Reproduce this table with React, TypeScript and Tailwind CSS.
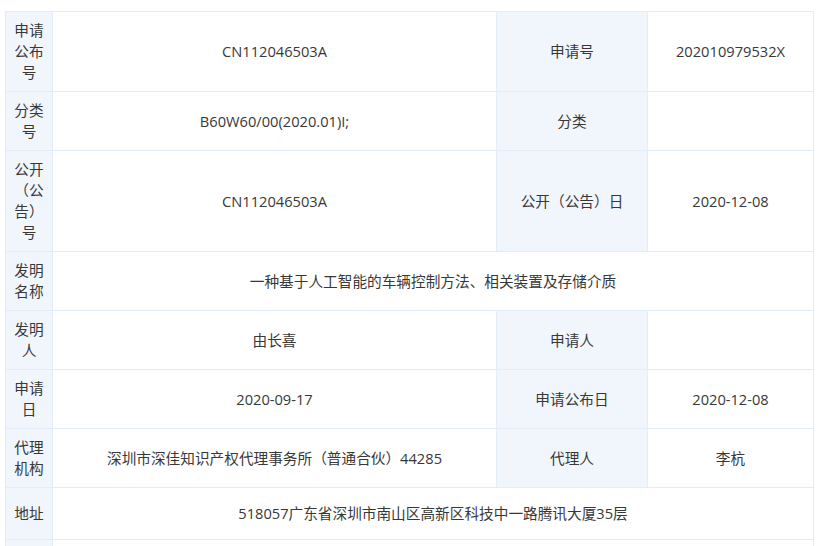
type Cell = { text: string; label?: boolean; span?: number };

const rows: { cells: Cell[]; h?: string }[] = [
  {
    cells: [
      { text: "申请公布号", label: true },
      { text: "CN112046503A" },
      { text: "申请号", label: true },
      { text: "202010979532X" },
    ],
  },
  {
    cells: [
      { text: "分类号", label: true },
      { text: "B60W60/00(2020.01)I;" },
      { text: "分类", label: true },
      { text: "" },
    ],
  },
  {
    cells: [
      { text: "公开（公告）号", label: true },
      { text: "CN112046503A" },
      { text: "公开（公告）日", label: true },
      { text: "2020-12-08" },
    ],
  },
  {
    cells: [
      { text: "发明名称", label: true },
      { text: "一种基于人工智能的车辆控制方法、相关装置及存储介质", span: 3 },
    ],
  },
  {
    cells: [
      { text: "发明人", label: true },
      { text: "由长喜" },
      { text: "申请人", label: true },
      { text: "" },
    ],
  },
  {
    cells: [
      { text: "申请日", label: true },
      { text: "2020-09-17" },
      { text: "申请公布日", label: true },
      { text: "2020-12-08" },
    ],
  },
  {
    cells: [
      { text: "代理机构", label: true },
      { text: "深圳市深佳知识产权代理事务所（普通合伙）44285" },
      { text: "代理人", label: true },
      { text: "李杭" },
    ],
  },
  {
    cells: [
      { text: "地址", label: true },
      { text: "518057广东省深圳市南山区高新区科技中一路腾讯大厦35层", span: 3 },
    ],
    h: "h-[52px]",
  },
  {
    // next row, only its top edge shows in the window
    cells: [
      { text: "", label: true },
      { text: "", span: 3 },
    ],
    h: "h-[80px]",
  },
];

export default function App() {
  return (
    <div className="h-[546px] w-[823px] overflow-hidden bg-white pl-[5px] pt-[11px] font-['Open_Sans','Noto_Sans_CJK_SC',sans-serif] text-[14.67px] leading-[21px] text-[#383838]">
      <table className="w-[808px] table-fixed border-collapse">
        <colgroup>
          <col className="w-[47px]" />
          <col className="w-[444px]" />
          <col className="w-[151px]" />
          <col className="w-[166px]" />
        </colgroup>
        <tbody>
          {rows.map((row, i) => (
            <tr key={i} className={row.h}>
              {row.cells.map((c, j) => (
                <td
                  key={j}
                  colSpan={c.span}
                  className={
                    c.label
                      ? "border border-[#e3edf8] bg-[#f1f6fc] px-[8px] py-2 text-center align-middle"
                      : "border border-[#e3edf8] px-3 py-2 text-center align-middle"
                  }
                >
                  {c.text}
                </td>
              ))}
            </tr>
          ))}
        </tbody>
      </table>
    </div>
  );
}
